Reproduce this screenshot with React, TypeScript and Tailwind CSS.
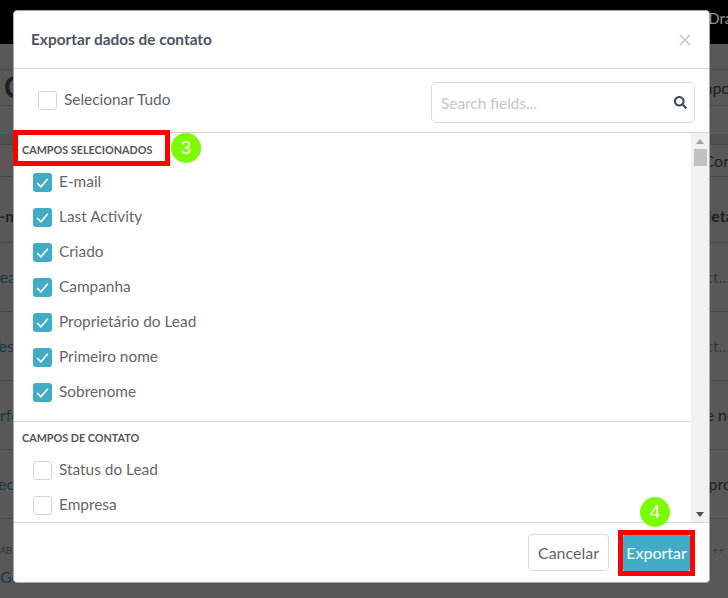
import React from 'react';
import { FaSearch } from 'react-icons/fa';

const lato = { fontFamily: 'Lato, sans-serif' };

// page rows dimmed behind the modal: only the cut off ends stay visible
const Row: React.FC<{
  className: string;
  left?: React.ReactNode;
  right?: React.ReactNode;
}> = ({ className, left, right }) => (
  <div className={`flex items-center justify-between overflow-hidden whitespace-nowrap text-[16px] text-[#1f1f1f] ${className}`}>
    <span>{left}</span>
    <span>{right}</span>
  </div>
);

const Check: React.FC<{ checked?: boolean }> = ({ checked }) =>
  checked ? (
    <span className="mt-[2px] flex h-[19px] w-[19px] shrink-0 items-center justify-center rounded-[3px] bg-[#41acc6]">
      <svg viewBox="0 0 14 14" className="h-[15px] w-[15px]" fill="none" stroke="#fff" strokeWidth="1.5">
        <path d="M2 7.5 L5.5 11 L12 3.5" />
      </svg>
    </span>
  ) : (
    <span className="mt-[2px] h-[19px] w-[19px] shrink-0 rounded-[3px] border border-[#d5d5d5] bg-white" />
  );

const Field: React.FC<{ label: string; checked?: boolean }> = ({ label, checked }) => (
  <div className="flex h-[35px] items-center gap-[7px] pl-[19px] text-[15.4px] text-[#666]">
    <Check checked={checked} />
    <span>{label}</span>
  </div>
);

const Marker: React.FC<{ n: number; className: string }> = ({ n, className }) => (
  <div
    className={`absolute flex h-[30px] w-[30px] items-center justify-center rounded-full bg-[#7cfc00] text-[18px] text-white ${className}`}
    style={{ fontFamily: '"Liberation Sans", sans-serif' }}
  >
    {n}
  </div>
);

const selected = ['E-mail', 'Last Activity', 'Criado', 'Campanha', 'Proprietário do Lead', 'Primeiro nome', 'Sobrenome'];

export default function App() {
  return (
    <div className="relative h-[598px] w-[728px] overflow-hidden bg-[#585858]" style={lato}>
      {/* Page behind the modal */}
      <div className="flex h-[44px] items-center justify-end overflow-hidden bg-black pb-[7px] text-[15px] text-[#999]">
        <span className="-mr-[12px] whitespace-nowrap">Drag</span>
      </div>
      <div className="h-[26px] border-b border-[#4a4a4a]" />
      <Row
        className="h-[36px] border-b border-[#4a4a4a]"
        left={<span className="ml-[4px] text-[30px] font-bold leading-none text-[#1a2025]">C</span>}
        right={<span className="-mr-[14px] inline-block">Import</span>}
      />
      <div className="h-[28px]" />
      <div className="h-[11px] border-b border-[#4a4a4a] bg-[#505050]" />
      <Row className="h-[32px] border-b border-[#4a4a4a]" right={<span className="-mr-[1px] inline-block">Cor</span>} />
      <Row
        className="h-[66px] border-b border-[#4a4a4a] font-bold"
        left={<span className="-ml-[10px] inline-block pt-[13px]">E-mail</span>}
        right={<span className="-mr-[25px] inline-block pt-[13px]">Proprietario</span>}
      />
      <Row
        className="h-[69px] border-b border-[#4a4a4a] text-[#163a47]"
        left={<span className="-ml-[8px] inline-block">Lead</span>}
        right={<span className="-mr-[2px] inline-block text-[#3a3a3a]">ct...</span>}
      />
      <Row
        className="h-[69px] border-b border-[#4a4a4a] text-[#163a47]"
        left={<span className="-ml-[9px] inline-block">Test</span>}
        right={<span className="-mr-[2px] inline-block text-[#3a3a3a]">ct...</span>}
      />
      <Row
        className="h-[69px] border-b border-[#4a4a4a] text-[#163a47]"
        left={<span className="inline-block">rfo</span>}
        right={<span className="-mr-[8px] inline-block text-[#1f1f1f]">e no</span>}
      />
      <Row
        className="h-[69px] border-b border-[#4a4a4a] text-[#163a47]"
        left={<span className="-ml-[2px] inline-block">eo</span>}
        right={<span className="-mr-[4px] inline-block text-[#1f1f1f]">pro</span>}
      />
      <Row
        className="h-[36px] items-end"
        left={<span className="block text-[9px] leading-[9px] text-[#333]">AB</span>}
        right={<span className="mr-[4px] block text-[10px] leading-[10px] text-[#333]">++</span>}
      />
      <Row className="h-[43px] text-[#163a47]" left={<span>Ge</span>} />

      {/* Export modal */}
      <div className="absolute left-[13px] top-[10px] flex h-[573px] w-[697px] flex-col overflow-hidden rounded-[4px] border border-[#a8a8a8] bg-white">
        <div className="flex h-[58px] shrink-0 items-center justify-between border-b border-[#d4d4d4] pl-[17px] pr-[18px]">
          <h2 className="text-[15.4px] font-bold text-[#4b5563]">Exportar dados de contato</h2>
          <svg viewBox="0 0 12 12" className="h-[12px] w-[12px]" stroke="#cfcfcf" strokeWidth="1.8">
            <path d="M1 1 L11 11 M11 1 L1 11" />
          </svg>
        </div>

        <div className="flex h-[64px] shrink-0 items-center justify-between border-b border-[#d4d4d4] pl-[24px] pr-[14px]">
          <label className="flex items-center gap-[7px] pb-[2px] text-[15.4px] text-[#5a6470]">
            <Check />
            Selecionar Tudo
          </label>
          <div className="mt-[4px] flex h-[41px] w-[264px] items-center justify-between rounded-[5px] border border-[#d9d9d9] pl-[9px] pr-[7px]">
            <span className="pt-[2px] text-[15.4px] text-[#c6c6c6]">Search fields...</span>
            <FaSearch className="h-[13px] w-[13px] text-[#3d4b5c]" />
          </div>
        </div>

        <div className="flex min-h-0 flex-1">
          <div className="min-w-0 flex-1">
            <h3 className="flex h-[25px] items-end pl-[8px] text-[10.8px] font-bold uppercase text-[#555]">Campos selecionados</h3>
            <div className="pt-[6px]">
              {selected.map((label) => (
                <Field key={label} label={label} checked />
              ))}
            </div>
            <div className="mt-[12px] border-t border-[#d4d4d4]">
              <h3 className="flex h-[24px] items-end pl-[8px] text-[10.8px] font-bold uppercase text-[#555]">Campos de contato</h3>
              <div className="pt-[6px]">
                <Field label="Status do Lead" />
                <Field label="Empresa" />
              </div>
            </div>
          </div>
          <div className="flex w-[18px] shrink-0 flex-col items-center justify-between bg-[#f1f1f1] pb-[5px] pt-[6px]">
            <div className="flex flex-col items-center gap-[5px]">
              <span className="h-0 w-0 border-x-[4px] border-b-[5px] border-x-transparent border-b-[#a3a3a3]" />
              <span className="h-[17px] w-[13px] bg-[#c1c1c1]" />
            </div>
            <span className="h-0 w-0 border-x-[4px] border-t-[5px] border-x-transparent border-t-[#505050]" />
          </div>
        </div>

        <div className="flex h-[60px] shrink-0 items-center justify-end gap-[14px] border-t border-[#d4d4d4] pr-[19px]">
          <button className="h-[37px] w-[81px] rounded-[4px] border border-[#d9d9d9] bg-white text-[16px] text-[#5a6470]">Cancelar</button>
          <button className="h-[36px] w-[67px] rounded-[2px] bg-[#41acc6] text-[16px] text-white">Exportar</button>
        </div>
      </div>

      {/* Tutorial annotations */}
      <div className="absolute left-[13px] top-[130px] h-[36px] w-[157px] border-[5px] border-[#ff0000]" />
      <Marker n={3} className="left-[171px] top-[133px]" />
      <div className="absolute left-[618px] top-[530px] h-[46px] w-[77px] border-[5px] border-[#ff0000]" />
      <Marker n={4} className="left-[640px] top-[497px]" />
    </div>
  );
}
